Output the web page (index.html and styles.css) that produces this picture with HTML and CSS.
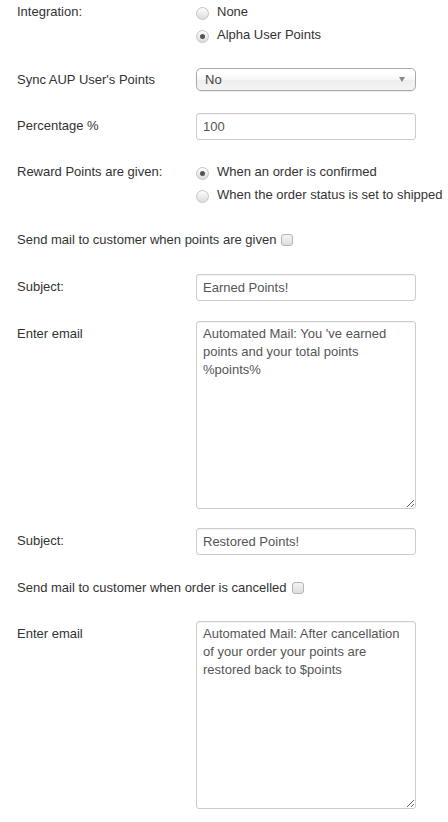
FILE: index.html
```html
<!DOCTYPE html>
<html lang="en">
<head>
    <meta charset="UTF-8">
    <meta name="viewport" content="width=device-width, initial-scale=1.0">
    <title>Reward Points Settings</title>
    <link rel="stylesheet" href="styles.css">
</head>
<body>
    <form class="settings">
        <div class="form-row row-integration">
            <span class="row-label label-radio">Integration:</span>
            <div class="radio-group">
                <label class="radio"><input type="radio" name="integration" value="none"> None</label>
                <label class="radio"><input type="radio" name="integration" value="aup" checked> Alpha User Points</label>
            </div>
        </div>

        <div class="form-row row-sync">
            <label class="row-label label-select" for="syncPoints">Sync AUP User's Points</label>
            <div class="fake-select" id="syncPoints">
                <span>No</span>
                <span class="select-arrow"></span>
            </div>
        </div>

        <div class="form-row row-percentage">
            <label class="row-label label-input" for="percentage">Percentage %</label>
            <input type="text" id="percentage" value="100">
        </div>

        <div class="form-row row-reward">
            <span class="row-label label-radio">Reward Points are given:</span>
            <div class="radio-group">
                <label class="radio"><input type="radio" name="given" value="confirmed" checked> When an order is confirmed</label>
                <label class="radio nowrap"><input type="radio" name="given" value="shipped"> When the order status is set to shipped</label>
            </div>
        </div>

        <div class="check-row row-check-given">
            <label>Send mail to customer when points are given <input type="checkbox"></label>
        </div>

        <div class="form-row row-subject">
            <label class="row-label label-input" for="subjectEarned">Subject:</label>
            <input type="text" id="subjectEarned" value="Earned Points!">
        </div>

        <div class="form-row row-mail">
            <label class="row-label label-textarea" for="mailEarned">Enter email</label>
            <textarea id="mailEarned">Automated Mail: You 've earned points and your total points %points%</textarea>
        </div>

        <div class="form-row row-subject-restored">
            <label class="row-label label-input" for="subjectRestored">Subject:</label>
            <input type="text" id="subjectRestored" value="Restored Points!">
        </div>

        <div class="check-row row-check-cancelled">
            <label>Send mail to customer when order is cancelled <input type="checkbox"></label>
        </div>

        <div class="form-row row-mail-restored">
            <label class="row-label label-textarea" for="mailRestored">Enter email</label>
            <textarea id="mailRestored">Automated Mail: After cancellation of your order your points are restored back to $points</textarea>
        </div>
    </form>
</body>
</html>
```

FILE: styles.css
```css
body {
    margin: 0;
    background-color: #fff;
    font-family: "Liberation Sans", Arial, sans-serif;
    font-size: 13px;
    line-height: 18px;
    color: #333;
}
.settings {
    padding: 3px 0 0 17px;
    width: 431px;
    box-sizing: border-box;
}
.form-row {
    display: grid;
    grid-template-columns: 179px 220px;
    align-items: start;
}
.row-label {
    display: block;
}
.label-select {
    padding-top: 3px;
}
.label-input {
    padding-top: 4px;
}
.label-textarea {
    padding-top: 4px;
}

/* spacing between rows */
.row-sync { margin-top: 24px; }
.row-percentage { margin-top: 22px; }
.row-reward { margin-top: 23px; }
.row-check-given { margin-top: 27px; }
.row-subject { margin-top: 25px; }
.row-mail { margin-top: 20px; }
.row-subject-restored { margin-top: 19px; }
.row-check-cancelled { margin-top: 24px; }
.row-mail-restored { margin-top: 24px; }

.radio-group {
    display: flex;
    flex-direction: column;
    gap: 5px;
}
.radio {
    display: flex;
    align-items: center;
    height: 18px;
    white-space: nowrap;
}
.radio input {
    -webkit-appearance: none;
    appearance: none;
    width: 13px;
    height: 13px;
    margin: 2px 8px 0 0;
    border: 1px solid #c4c4c4;
    border-radius: 50%;
    background: linear-gradient(#fdfdfd, #dcdcdc);
    box-sizing: border-box;
    position: relative;
    flex: none;
}
.radio input:checked::after {
    content: "";
    position: absolute;
    left: 3px;
    top: 3px;
    width: 5px;
    height: 5px;
    border-radius: 50%;
    background-color: #555;
}

.fake-select {
    height: 23px;
    border: 1px solid #aaa;
    border-radius: 5px;
    background: linear-gradient(#fff 20%, #f6f6f6 50%, #eee 52%, #f4f4f4 100%);
    box-sizing: border-box;
    display: flex;
    align-items: center;
    justify-content: space-between;
    padding: 0 10px 0 8px;
    color: #444;
    box-shadow: 0 1px 1px rgba(0,0,0,0.08);
}
.select-arrow {
    width: 0;
    height: 0;
    border-left: 3px solid transparent;
    border-right: 3px solid transparent;
    border-top: 5px solid #888;
}

input[type="text"],
textarea {
    width: 220px;
    border: 1px solid #ccc;
    border-radius: 3px;
    box-sizing: border-box;
    font-family: "Liberation Sans", Arial, sans-serif;
    font-size: 13px;
    color: #555;
    background-color: #fff;
    box-shadow: inset 0 1px 1px rgba(0,0,0,0.05);
    margin: 0;
}
input[type="text"] {
    height: 27px;
    padding: 4px 6px;
    line-height: 17px;
}
textarea {
    height: 188px;
    padding: 3px 6px;
    line-height: 18px;
    resize: vertical;
    overflow: hidden;
}

.check-row label {
    display: flex;
    align-items: center;
    height: 18px;
    white-space: nowrap;
}
.check-row input {
    -webkit-appearance: none;
    appearance: none;
    width: 12px;
    height: 12px;
    margin: 0 0 0 5px;
    border: 1px solid #b4b4b4;
    border-radius: 3px;
    background: linear-gradient(#f4f4f4, #dedede);
    box-sizing: border-box;
}
```
